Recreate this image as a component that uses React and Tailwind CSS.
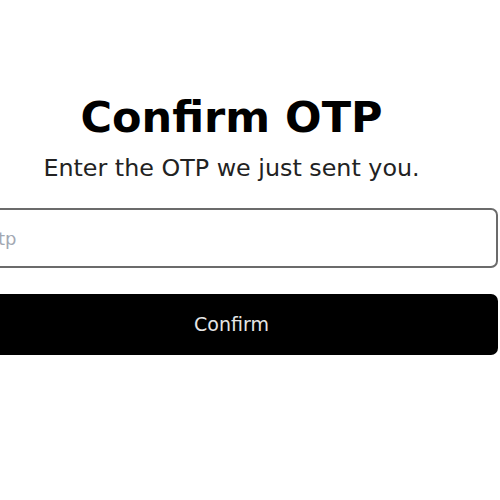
export default function App() {
  return (
    <div className="min-h-screen bg-white overflow-hidden" style={{ fontFamily: '"DejaVu Sans", sans-serif' }}>
      <div className="w-[533px] ml-[-35px] pt-[92px] flex flex-col items-center">
        <h1 className="text-[43px] font-bold text-black leading-[normal]">
          Confirm OTP
        </h1>

        <p className="mt-[12px] text-[23.8px] text-[#222] leading-[normal]">
          Enter the OTP we just sent you.
        </p>

        <input
          type="text"
          placeholder="otp"
          className="mt-[26px] w-full h-[60px] px-[20px] text-[18px] rounded-[7px] border-2 border-[#6b6b6b] outline-none placeholder:text-[#a3a8b3]"
        />

        <button className="mt-[26px] w-full h-[61px] rounded-[7px] bg-black text-[19px] text-[#e5e5e5]">
          Confirm
        </button>
      </div>
    </div>
  );
}
